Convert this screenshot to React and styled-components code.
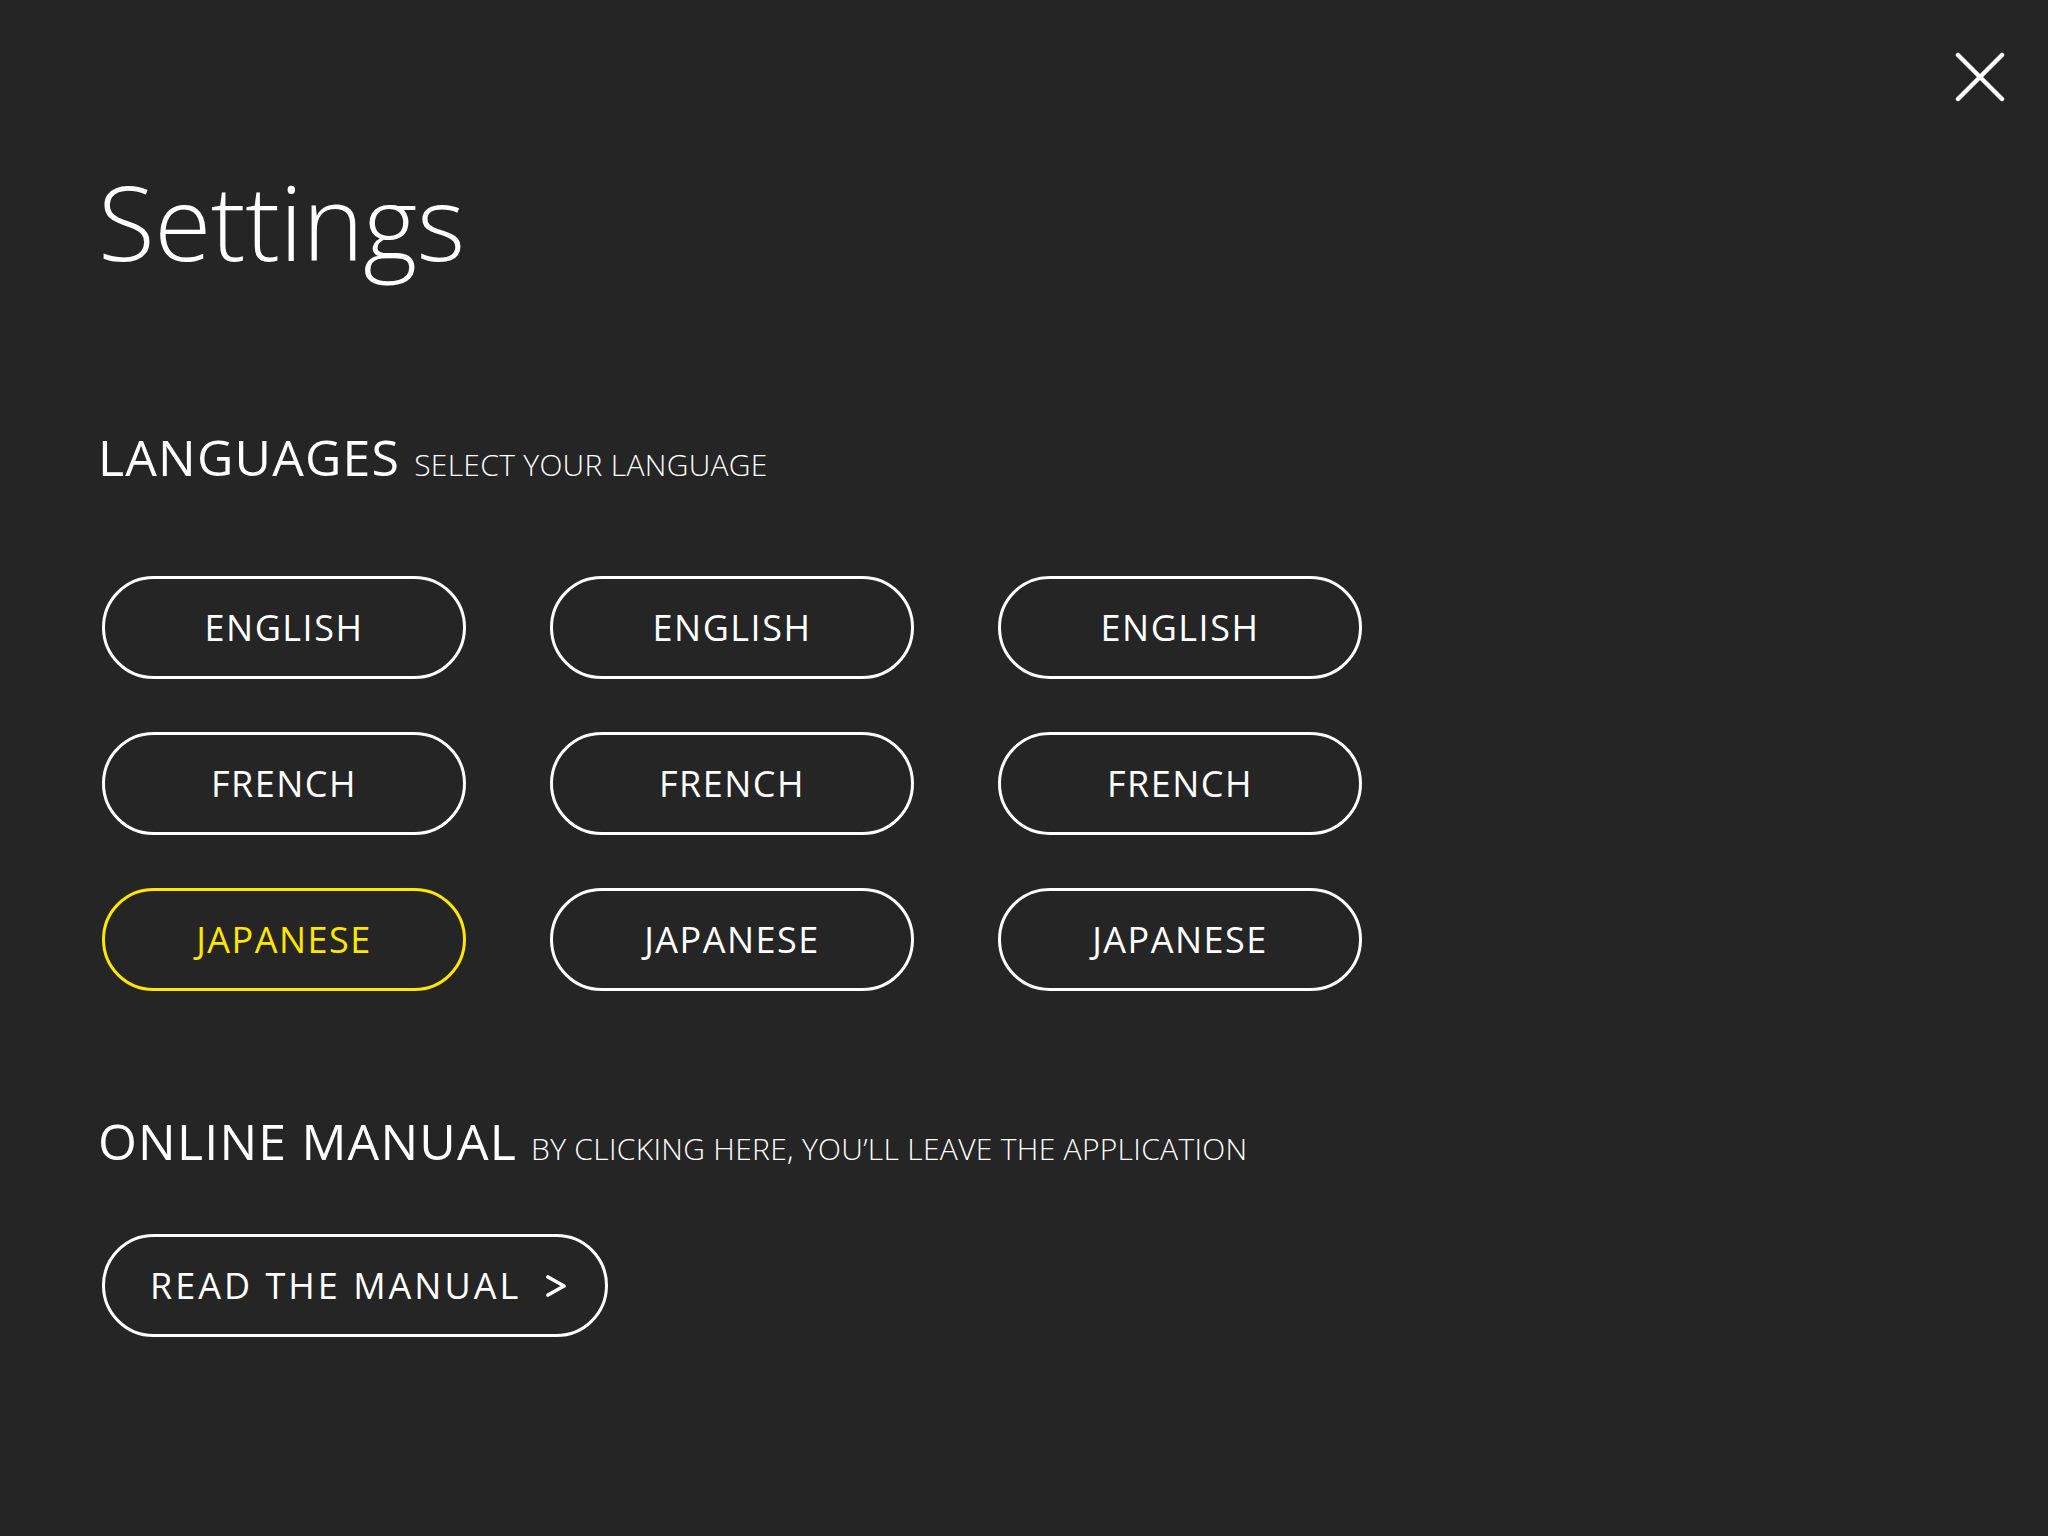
import React, { useState } from "react";
import styled, { createGlobalStyle } from "styled-components";

const Global = createGlobalStyle`
  html, body { margin: 0; padding: 0; background: #252525; }
  body { font-family: "Open Sans", "Noto Sans", sans-serif; color: #ffffff; }
  * { box-sizing: border-box; }
`;

const Page = styled.div`
  position: relative;
  min-height: 1536px;
  background: #252525;
  padding: 0 0 0 98px;
  display: flex;
  flex-direction: column;
  align-items: flex-start;
`;

const CloseButton = styled.button`
  position: absolute;
  top: 52px;
  right: 43px;
  width: 50px;
  height: 50px;
  padding: 0;
  background: none;
  border: none;
  cursor: pointer;
  display: flex;
  align-items: center;
  justify-content: center;
`;

const Title = styled.h1`
  margin: 169px 0 0 0;
  font-size: 104px;
  line-height: 104px;
  font-weight: 300;
  letter-spacing: -0.5px;
`;

const SectionHeader = styled.div`
  display: flex;
  align-items: baseline;
  gap: 14px;
  margin-top: ${(p) => p.$top}px;
  line-height: 60px;
`;

const SectionTitle = styled.h2`
  margin: 0;
  font-size: 50px;
  font-weight: 400;
  line-height: 60px;
  letter-spacing: 1.2px;
`;

const SectionHint = styled.span`
  font-size: 30px;
  font-weight: 300;
  letter-spacing: 0.3px;
`;

const LangGrid = styled.div`
  margin-top: 81px;
  margin-left: 4px;
  display: grid;
  grid-template-columns: repeat(3, 364px);
  column-gap: 84px;
  row-gap: 53px;
`;

const Pill = styled.button`
  height: 103px;
  border-radius: 52px;
  border: 3px solid ${(p) => (p.$active ? "#ffe600" : "#ffffff")};
  background: transparent;
  color: ${(p) => (p.$active ? "#ffe600" : "#ffffff")};
  font-family: "Open Sans", "Noto Sans", sans-serif;
  font-size: 36px;
  font-weight: 400;
  letter-spacing: 1.5px;
  display: flex;
  align-items: center;
  justify-content: center;
  cursor: pointer;
  padding: 0;
`;

const ManualButton = styled(Pill)`
  margin-top: 55px;
  margin-left: 4px;
  width: 506px;
  justify-content: flex-start;
  gap: 24px;
  padding: 0 0 0 45px;
  letter-spacing: 3px;
`;

const Chevron = () => (
  <svg width="22" height="22" viewBox="0 0 22 22" fill="none">
    <polyline points="3,2 19,11 3,20" stroke="#fff" strokeWidth="3.6" strokeLinecap="round" strokeLinejoin="round" />
  </svg>
);

const CloseIcon = () => (
  <svg width="50" height="50" viewBox="0 0 50 50" fill="none">
    <line x1="3" y1="3" x2="47" y2="47" stroke="#fff" strokeWidth="4.5" strokeLinecap="round" />
    <line x1="47" y1="3" x2="3" y2="47" stroke="#fff" strokeWidth="4.5" strokeLinecap="round" />
  </svg>
);

const rows = ["ENGLISH", "FRENCH", "JAPANESE"];

export default function App() {
  const [selected, setSelected] = useState("JAPANESE-0");
  return (
    <Page>
      <Global />
      <CloseButton aria-label="Close">
        <CloseIcon />
      </CloseButton>
      <Title>Settings</Title>
      <SectionHeader $top={154}>
        <SectionTitle>LANGUAGES</SectionTitle>
        <SectionHint>SELECT YOUR LANGUAGE</SectionHint>
      </SectionHeader>
      <LangGrid>
        {rows.map((lang) =>
          [0, 1, 2].map((col) => {
            const key = `${lang}-${col}`;
            return (
              <Pill key={key} $active={selected === key} onClick={() => setSelected(key)}>
                {lang}
              </Pill>
            );
          })
        )}
      </LangGrid>
      <SectionHeader $top={120}>
        <SectionTitle>ONLINE MANUAL</SectionTitle>
        <SectionHint>BY CLICKING HERE, YOU’LL LEAVE THE APPLICATION</SectionHint>
      </SectionHeader>
      <ManualButton>
        READ THE MANUAL
        <Chevron />
      </ManualButton>
    </Page>
  );
}
